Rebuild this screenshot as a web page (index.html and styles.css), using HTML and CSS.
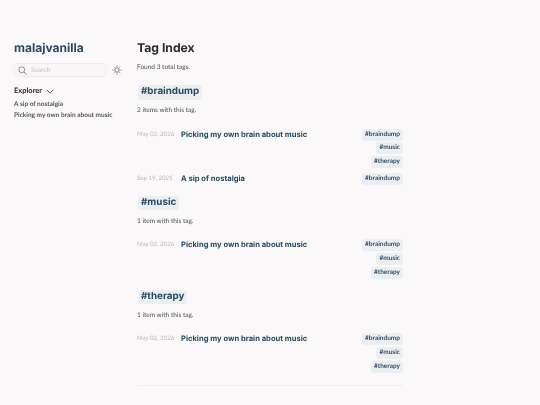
FILE: index.html
```html
<!DOCTYPE html>
<html lang="en">
<head>
<meta charset="utf-8">
<title>Tag Index</title>
<link rel="stylesheet" href="styles.css">
</head>
<body>
<div class="page">
  <aside class="sidebar">
    <h2 class="site-title">malajvanilla</h2>
    <div class="tools">
      <div class="search">
        <svg class="search-icon" viewBox="0 0 12 12" width="9" height="9"><circle cx="5" cy="5" r="3.900"/><path d="M8 8l3.400 3.400"/></svg>
        <span>Search</span>
      </div>
      <svg class="sun" viewBox="0 0 12 12" width="10" height="10"><circle cx="6" cy="6" r="2.700"/><path d="M6 .3v1.600M6 10.100v1.600M.3 6h1.600M10.100 6h1.600M2 2l1.100 1.100M8.900 8.900L10 10M2 10l1.100-1.100M8.900 3.100L10 2"/></svg>
    </div>
    <div class="explorer">
      <span>Explorer</span>
      <svg viewBox="0 0 10 6" width="8" height="5"><path d="M1 1l4 4 4-4"/></svg>
    </div>
    <ul class="nav">
      <li>A sip of nostalgia</li>
      <li>Picking my own brain about music</li>
    </ul>
  </aside>
  <main class="content">
    <h1>Tag Index</h1>
    <p class="note found">Found 3 total tags.</p>

    <section class="tag-section">
      <h2 class="tag-head"><span>#braindump</span></h2>
      <p class="note">2 items with this tag.</p>
      <ul class="posts">
        <li class="post">
          <span class="date">May 02, 2026</span>
          <span class="title">Picking my own brain about music</span>
          <div class="tags"><span>#braindump</span><span>#music</span><span>#therapy</span></div>
        </li>
        <li class="post">
          <span class="date">Sep 19, 2025</span>
          <span class="title">A sip of nostalgia</span>
          <div class="tags"><span>#braindump</span></div>
        </li>
      </ul>
    </section>

    <section class="tag-section">
      <h2 class="tag-head"><span>#music</span></h2>
      <p class="note">1 item with this tag.</p>
      <ul class="posts">
        <li class="post">
          <span class="date">May 02, 2026</span>
          <span class="title">Picking my own brain about music</span>
          <div class="tags"><span>#braindump</span><span>#music</span><span>#therapy</span></div>
        </li>
      </ul>
    </section>

    <section class="tag-section">
      <h2 class="tag-head"><span>#therapy</span></h2>
      <p class="note">1 item with this tag.</p>
      <ul class="posts">
        <li class="post">
          <span class="date">May 02, 2026</span>
          <span class="title">Picking my own brain about music</span>
          <div class="tags"><span>#braindump</span><span>#music</span><span>#therapy</span></div>
        </li>
      </ul>
    </section>
    <hr class="rule">
  </main>
</div>
</body>
</html>
```
FILE: styles.css
```css
* { box-sizing: border-box; }
html, body { margin: 0; height: 100%; overflow: hidden; background: #faf8f8; }
body {
  color: #4e4e4e;
  font-family: Lato, sans-serif;
  font-size: 6.5px;
  text-rendering: geometricPrecision;
}
ul { list-style: none; margin: 0; padding: 0; }
.page {
  display: flex;
  padding-top: 40px;
  filter: blur(.3px);
}
.sidebar { width: 137px; padding-left: 14px; flex: none; }
.site-title {
  margin: 0;
  font: 700 12px/15px Inter, sans-serif;
  color: #284b63;
}
.tools { display: flex; align-items: center; gap: 6px; margin-top: 8px; }
.search {
  width: 92px; height: 14px;
  display: flex; align-items: center; gap: 4px;
  padding-left: 3px;
  background: #f8f6f6;
  border: 1px solid #eeecec;
  border-radius: 3px;
  color: #c4c2c4;
}
.search-icon, .sun { fill: none; stroke: #4e4e4e; stroke-width: .8; }
.explorer {
  display: flex; align-items: center; gap: 4px;
  margin-top: 9px;
  font: 700 7.500px/10px Lato, sans-serif;
  color: #2b2b2b;
}
.explorer svg { fill: none; stroke: #2b2b2b; stroke-width: 1; }
.nav { margin-top: 3px; font-weight: 700; color: #555; line-height: 11px; }
.content { width: 266px; flex: none; }
h1 {
  margin: 0;
  font: 700 12.200px/15px Inter, sans-serif;
  color: #2b2b2b;
}
.note { margin: 0; line-height: 9px; }
.found { margin-top: 8px; }
.tag-section { margin-top: 11px; }
.tag-section:first-of-type { margin-top: 13px; }
.tag-head { margin: 0 0 0 1px; font: 700 9.800px/14.500px Inter, sans-serif; color: #284b63; }
.tag-head span { display: inline-block; padding: 0 3px; background: #eceff2; border-radius: 3px; vertical-align: top; }
.tag-head + .note { margin-top: 6.500px; }
.posts { margin-top: 13.500px; }
.post { display: flex; align-items: flex-start; margin-bottom: 5px; }
.date { width: 44px; flex: none; font-size: 6.100px; color: #b8b8b8; line-height: 12px; }
.title { flex: 1; font: 700 7.600px/12px Inter, sans-serif; color: #284b63; }
.tags { display: flex; flex-direction: column; align-items: flex-end; gap: 1.700px; }
.tags span {
  height: 12px; padding: 0 3px;
  background: #eceff2; border-radius: 3px;
  font-weight: 700; font-size: 6.500px; line-height: 12px; color: #2f5068;
}
.rule { margin: 12px 0 0; border: 0; border-top: 1px solid #f0eeee; }
```
